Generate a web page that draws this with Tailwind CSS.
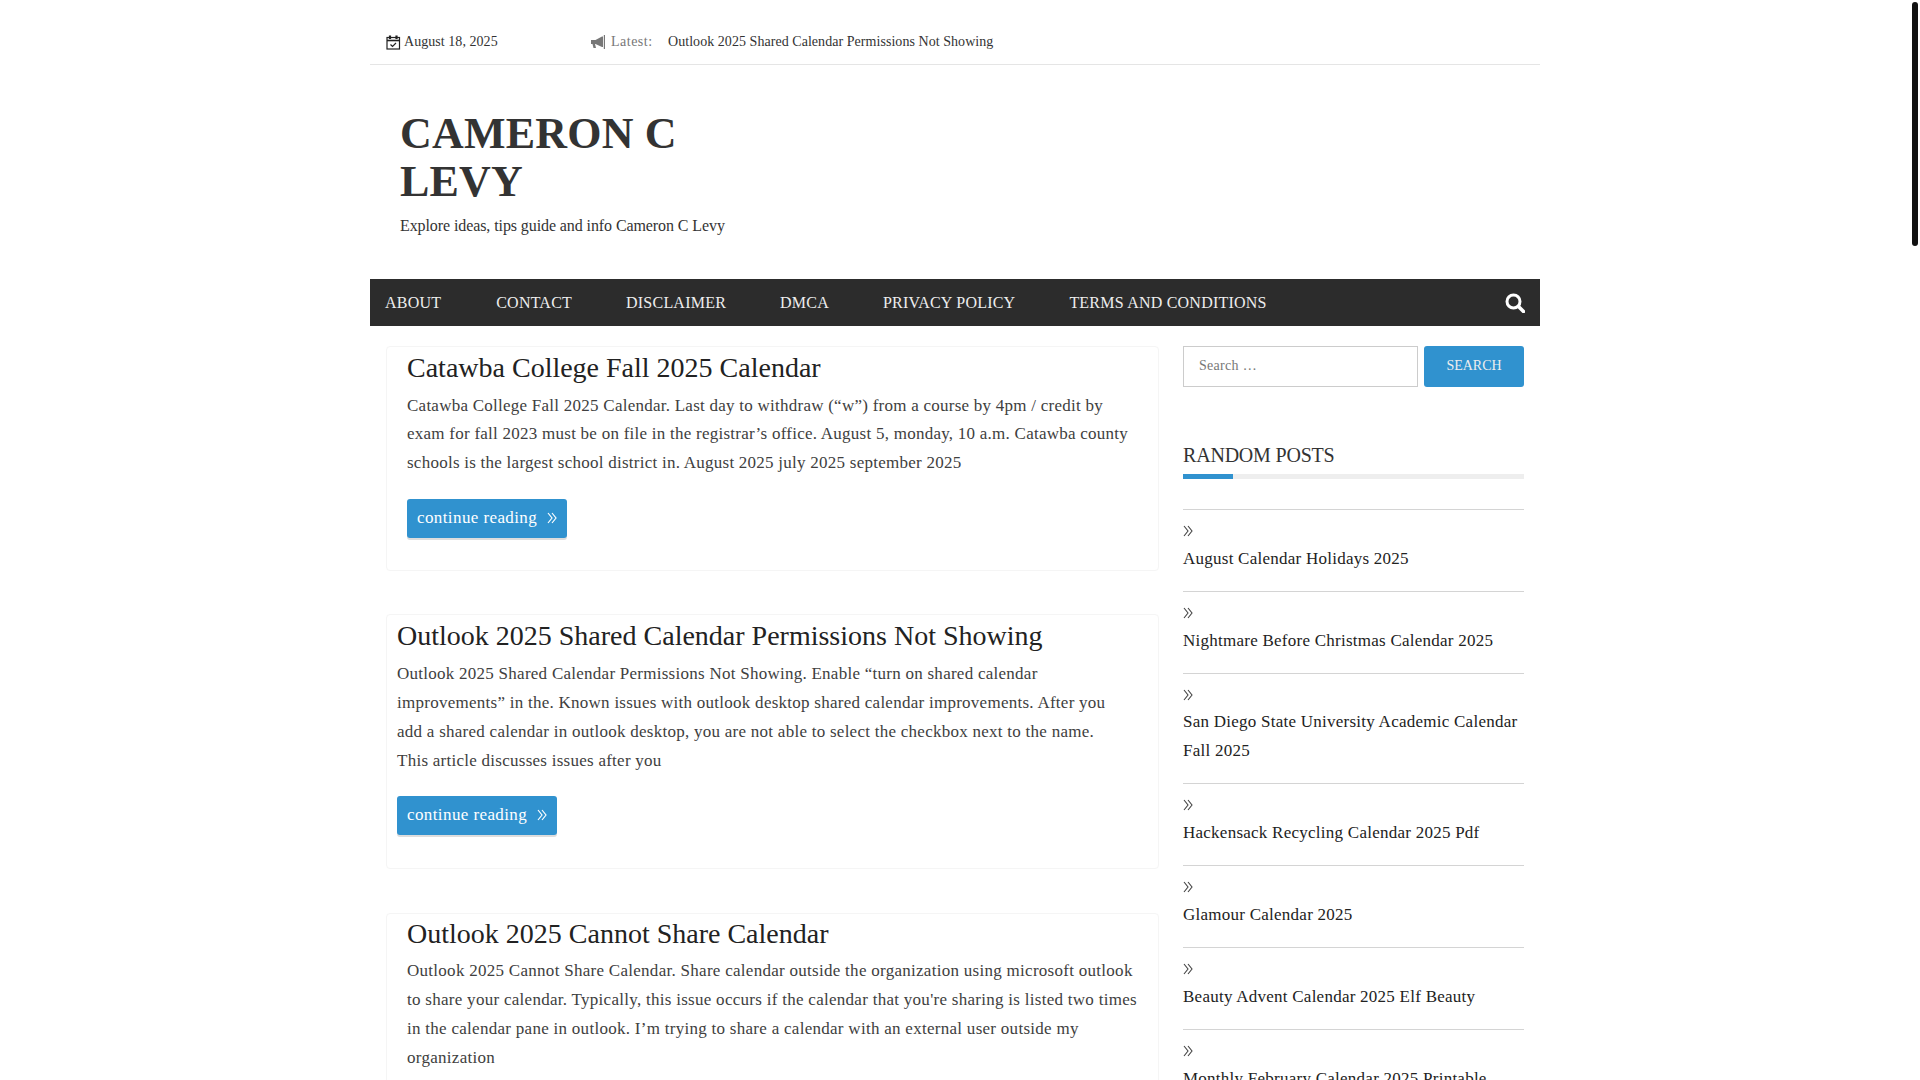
<!DOCTYPE html>
<html lang="en">
<head>
  <meta charset="UTF-8" />
  <title>Cameron C Levy</title>
  <script src="https://cdn.jsdelivr.net/npm/@tailwindcss/browser@4"></script>
</head>
<body class="bg-white font-['Liberation_Serif',serif] text-[#404040] h-[1080px] overflow-hidden flex">

  <div class="w-[1910px] shrink-0">
    <div class="w-[1170px] mx-auto">

      <!-- Top bar -->
      <div class="h-[65px] border-b border-[#e5e5e5] pt-[33px] flex items-start text-[14px] leading-[18px] tracking-[0.05px]">
        <div class="w-[221px] pl-[16px] flex items-center gap-[3px] text-[#333]">
          <svg class="w-[15px] h-[15px]" viewBox="0 0 15 15" fill="none" stroke="#222" stroke-width="1.200">
            <rect x="1" y="2.500" width="12.500" height="11.500" />
            <path d="M1 5.500h12.500" stroke-width="1.600" />
            <path d="M4 .5v3.500M10.500 .5v3.500" stroke-width="2.200" />
            <path d="M4.500 9.500l2 2 3.500-3.500" />
          </svg>
          <span>August 18, 2025</span>
        </div>
        <div class="flex items-center">
          <svg class="w-[15px] h-[14px] mr-[5px]" viewBox="0 0 15 14" fill="#777">
            <path d="M0 5h4.500L11 1.500h1V12h-1L4.500 9H4l1 4H2.500L1.500 9H0z" />
            <path d="M12.800 0h1.200v14h-1.200z" />
          </svg>
          <span class="text-[#777] tracking-[0.5px] w-[57px]">Latest:</span>
          <span class="text-[#333]">Outlook 2025 Shared Calendar Permissions Not Showing</span>
        </div>
      </div>

      <!-- Branding -->
      <div class="h-[214px] pl-[30px] pt-[45px]">
        <h1 class="w-[340px] text-[44px] leading-[48px] font-bold text-[#333] tracking-[0.2px]">CAMERON C LEVY</h1>
        <p class="mt-[8px] text-[16px] leading-[24px] text-[#333] tracking-[-0.09px]">Explore ideas, tips guide and info Cameron C Levy</p>
      </div>

      <!-- Nav -->
      <nav class="h-[47px] bg-[#2c2c2c] flex items-center justify-between pl-[15px] pr-[15px] text-[#eee] text-[16px] tracking-[0.22px]">
        <div class="flex gap-[54px]">
          <a>ABOUT</a>
          <a class="ml-[1px]">CONTACT</a>
          <a>DISCLAIMER</a>
          <a>DMCA</a>
          <a>PRIVACY POLICY</a>
          <a>TERMS AND CONDITIONS</a>
        </div>
        <svg class="w-[20px] h-[20px]" viewBox="0 0 20 20" fill="none" stroke="#fff">
          <circle cx="8.500" cy="8.500" r="6.500" stroke-width="3" />
          <path d="M13.500 13.500l5 5" stroke-width="3.500" stroke-linecap="round" />
        </svg>
      </nav>

      <div class="flex pl-[16px] pt-[20px] items-start">

        <!-- Posts -->
        <main class="w-[773px] shrink-0">
          <article class="h-[225px] pl-[20px] pr-[20px] pt-[1px] border border-[#f5f5f5] rounded-[4px]">
            <h2 class="text-[28px] leading-[40px] text-[#222]">Catawba College Fall 2025 Calendar</h2>
            <p class="mt-[3.500px] text-[17px] leading-[28.900px] tracking-[0.25px]">Catawba College Fall 2025 Calendar. Last day to withdraw (“w”) from a course by 4pm / credit by exam for fall 2023 must be on file in the registrar’s office. August 5, monday, 10 a.m. Catawba county schools is the largest school district in. August 2025 july 2025 september 2025</p>
            <a class="mt-[20.500px] h-[39px] w-[160px] inline-flex items-center gap-[10px] pl-[10px] bg-[#3092cf] text-white text-[17px] tracking-[0.4px] rounded-[3px] shadow-[0_2px_0_#ddd]">continue reading
              <svg class="w-[10px] h-[12px]" viewBox="0 0 10 12" fill="none" stroke="#fff" stroke-width="1.200"><path d="M1 1l4 5-4 5M5 1l4 5-4 5" /></svg>
            </a>
          </article>

          <article class="mt-[43px] h-[255px] pl-[10px] pr-[40px] pt-[1px] border border-[#f5f5f5] rounded-[4px]">
            <h2 class="text-[28px] leading-[40px] text-[#222]">Outlook 2025 Shared Calendar Permissions Not Showing</h2>
            <p class="mt-[4px] text-[17px] leading-[28.900px] tracking-[0.26px]">Outlook 2025 Shared Calendar Permissions Not Showing. Enable “turn on shared calendar improvements” in the. Known issues with outlook desktop shared calendar improvements. After you add a shared calendar in outlook desktop, you are not able to select the checkbox next to the name. This article discusses issues after you</p>
            <a class="mt-[20px] h-[39px] w-[160px] inline-flex items-center gap-[10px] pl-[10px] bg-[#3092cf] text-white text-[17px] tracking-[0.4px] rounded-[3px] shadow-[0_2px_0_#ddd]">continue reading
              <svg class="w-[10px] h-[12px]" viewBox="0 0 10 12" fill="none" stroke="#fff" stroke-width="1.200"><path d="M1 1l4 5-4 5M5 1l4 5-4 5" /></svg>
            </a>
          </article>

          <article class="mt-[44px] pl-[20px] pr-[10px] border border-[#f5f5f5] rounded-[4px] h-[300px]">
            <h2 class="text-[28px] leading-[40px] text-[#222]">Outlook 2025 Cannot Share Calendar</h2>
            <p class="mt-[3px] text-[17px] leading-[28.900px] tracking-[0.28px]">Outlook 2025 Cannot Share Calendar. Share calendar outside the organization using microsoft outlook to share your calendar. Typically, this issue occurs if the calendar that you're sharing is listed two times in the calendar pane in outlook. I’m trying to share a calendar with an external user outside my organization</p>
          </article>
        </main>

        <!-- Sidebar -->
        <aside class="ml-[24px] w-[341px] shrink-0">
          <div class="flex gap-[6px]">
            <div class="w-[235px] h-[41px] border border-[#ccc] pl-[15px] flex items-center text-[14px] text-[#777] tracking-[0.3px] pb-[2px]">Search …</div>
            <div class="w-[100px] h-[41px] bg-[#3092cf] text-[#eee] text-[14px] rounded-[3px] flex items-center justify-center pb-[2px]">SEARCH</div>
          </div>

          <h3 class="mt-[56px] text-[20px] leading-[24px] text-[#333] tracking-[-0.2px]">RANDOM POSTS</h3>
          <div class="mt-[7px] h-[5px] bg-[#eee]"><div class="w-[50px] h-[5px] bg-[#3092cf]"></div></div>

          <ul class="mt-[30px] text-[17px] leading-[29px] text-[#222] tracking-[0.25px] border-t border-[#d4d4d4]">
            <li class="border-b border-[#d4d4d4] h-[82px] pt-[12px]">
              <svg class="w-[10px] h-[12px] mb-[7px] mt-[3px]" viewBox="0 0 10 12" fill="none" stroke="#444" stroke-width="1.100"><path d="M1 1l4 5-4 5M5 1l4 5-4 5" /></svg>
              August Calendar Holidays 2025
            </li>
            <li class="border-b border-[#d4d4d4] h-[82px] pt-[13px]">
              <svg class="w-[10px] h-[12px] mb-[7px] mt-[2px]" viewBox="0 0 10 12" fill="none" stroke="#444" stroke-width="1.100"><path d="M1 1l4 5-4 5M5 1l4 5-4 5" /></svg>
              Nightmare Before Christmas Calendar 2025
            </li>
            <li class="border-b border-[#d4d4d4] h-[110px] pt-[13px]">
              <svg class="w-[10px] h-[12px] mb-[6px] mt-[2px]" viewBox="0 0 10 12" fill="none" stroke="#444" stroke-width="1.100"><path d="M1 1l4 5-4 5M5 1l4 5-4 5" /></svg>
              San Diego State University Academic Calendar Fall 2025
            </li>
            <li class="border-b border-[#d4d4d4] h-[82px] pt-[13px]">
              <svg class="w-[10px] h-[12px] mb-[7px] mt-[2px]" viewBox="0 0 10 12" fill="none" stroke="#444" stroke-width="1.100"><path d="M1 1l4 5-4 5M5 1l4 5-4 5" /></svg>
              Hackensack Recycling Calendar 2025 Pdf
            </li>
            <li class="border-b border-[#d4d4d4] h-[82px] pt-[13px]">
              <svg class="w-[10px] h-[12px] mb-[7px] mt-[2px]" viewBox="0 0 10 12" fill="none" stroke="#444" stroke-width="1.100"><path d="M1 1l4 5-4 5M5 1l4 5-4 5" /></svg>
              Glamour Calendar 2025
            </li>
            <li class="border-b border-[#d4d4d4] h-[82px] pt-[13px]">
              <svg class="w-[10px] h-[12px] mb-[7px] mt-[2px]" viewBox="0 0 10 12" fill="none" stroke="#444" stroke-width="1.100"><path d="M1 1l4 5-4 5M5 1l4 5-4 5" /></svg>
              Beauty Advent Calendar 2025 Elf Beauty
            </li>
            <li class="h-[82px] pt-[13px]">
              <svg class="w-[10px] h-[12px] mb-[7px] mt-[2px]" viewBox="0 0 10 12" fill="none" stroke="#444" stroke-width="1.100"><path d="M1 1l4 5-4 5M5 1l4 5-4 5" /></svg>
              Monthly February Calendar 2025 Printable
            </li>
          </ul>
        </aside>
      </div>
    </div>
  </div>

  <!-- Scrollbar -->
  <div class="w-[10px] shrink-0 pt-[2px] pl-[2px]">
    <div class="w-[6px] h-[244px] bg-[#111] rounded-[3px]"></div>
  </div>
</body>
</html>
